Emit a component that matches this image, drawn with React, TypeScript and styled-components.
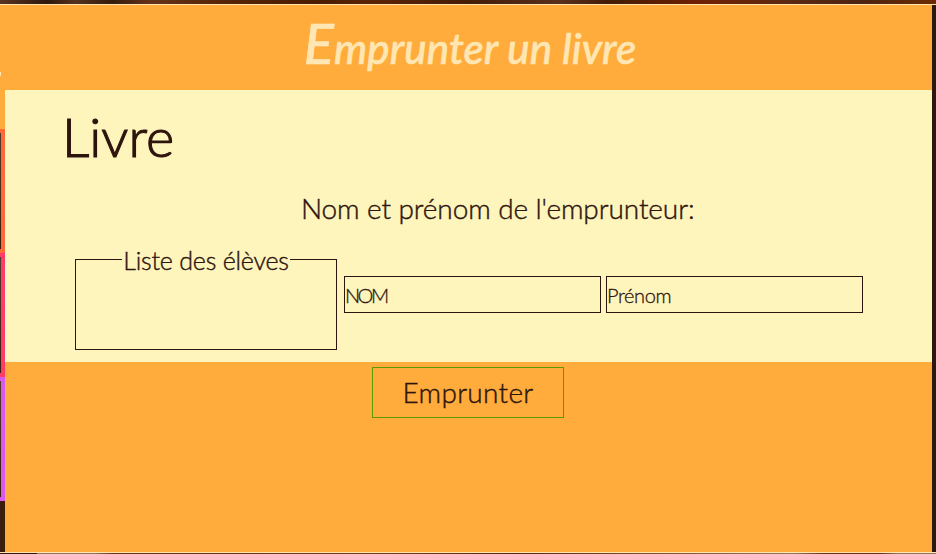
import React from "react";
import styled, { createGlobalStyle } from "styled-components";

const ink = "#2e140e";
const orange = "#ffac3c";
const cream = "#fdf5bc";

const GlobalStyle = createGlobalStyle`
  * { box-sizing: border-box; }
  body { margin: 0; background: #2e180d; color: ${ink}; font-family: Lato, "Open Sans", sans-serif; font-weight: 300; overflow: hidden; }
`;

const Page = styled.div`
  width: 936px;
  height: 554px;
  display: grid;
  grid-template-rows: 4px 549px 1px;
`;

const TopStrip = styled.div`
  background: linear-gradient(90deg, #5a3521 0%, #2e180d 5%, #55321f 8%, #351b0c 12%, #64331a 16%, #572408 24%, #4a1d02 34%, #5b2409 40%, #451c06 50%, #59301d 60%, #431c08 65%, #702100 75%, #5c2912 84%, #4c2413 92%, #6d2b00 100%);
`;

const BottomStrip = styled.div`
  background: linear-gradient(90deg, #2e180d 0 4%, #8d775c 4% 10%, #683211 12% 25%, #7b3d12 40%, #56270b 55%, #805028 70%, #8d775c 85%, #712b0b 88% 94%, #8d775c 96%);
`;

const Window = styled.div`
  display: grid;
  grid-template-columns: 5px 927px 4px;
  border-top: 1px solid #ffe4ae;
  border-bottom: 1px solid #ffe4ae;
`;

const Rail = styled.div`
  display: flex;
  flex-direction: column;
  background: #3a1d0c;
`;

const RailHead = styled.div`
  height: 124px;
  padding-top: 67px;
  background: ${orange};
`;

const RailMark = styled.div`
  width: 1px;
  height: 4px;
  background: #ffe4b5;
`;

const RailCard = styled.div<{ $color: string }>`
  height: 124px;
  border: solid ${(p) => p.$color};
  border-width: 4px 4px 4px 0;
  background: linear-gradient(#55392a, #3a1d0c);
`;

const Panel = styled.main`
  display: flex;
  flex-direction: column;
  background: ${orange};
`;

const Header = styled.header`
  height: 85px;
  display: flex;
  justify-content: center;
  padding: 12px 0 0 3px;
`;

const Title = styled.h1`
  margin: 0;
  font-size: 42px;
  line-height: 62px;
  font-weight: 500;
  font-style: italic;
  letter-spacing: 0.1px;
  white-space: nowrap;
  color: #ffe6b3;
  -webkit-text-stroke: 0.6px #ffe6b3;
  &::first-letter { font-size: 56px; line-height: 50px; }
`;

const Content = styled.section`
  height: 272px;
  background: ${cream};
`;

const BookTitle = styled.h2`
  margin: 0;
  padding: 15px 0 0 57px;
  font-size: 54px;
  line-height: 64px;
  font-weight: 300;
  letter-spacing: 0;
  -webkit-text-stroke: 1.1px ${ink};
`;

const Question = styled.p`
  margin: 0;
  height: 81px;
  padding: 21px 0 0 296px;
  font-size: 28px;
  line-height: 36px;
  letter-spacing: -0.1px;
  white-space: nowrap;
  -webkit-text-stroke: 0.4px ${ink};
`;

const Fields = styled.div`
  display: flex;
  align-items: flex-start;
  padding-left: 70px;
`;

const PupilList = styled.fieldset`
  width: 262px;
  height: 100px;
  margin: 0 7px 0 0;
  padding: 0;
  border: 1px solid ${ink};
`;

const Legend = styled.legend`
  margin: 0 auto;
  height: 19px;
  padding: 0 1px;
  font-size: 25px;
  line-height: 21px;
  letter-spacing: -0.2px;
  white-space: nowrap;
  -webkit-text-stroke: 0.4px ${ink};
`;

const NameInput = styled.input<{ $spacing: string }>`
  width: 257px;
  height: 37px;
  margin: 26px 5px 0 0;
  padding: 0;
  border: 1px solid ${ink};
  outline: 0;
  border-radius: 0;
  background: transparent;
  font: 300 20px Lato, sans-serif;
  letter-spacing: ${(p) => p.$spacing};
  color: ${ink};
  -webkit-text-stroke: 0.3px ${ink};
  &::placeholder { color: ${ink}; opacity: 1; }
`;

const Submit = styled.button`
  width: 192px;
  height: 51px;
  margin: 5px 0 0 367px;
  padding: 0 0 1px;
  border: 1px solid #5c9a00;
  background: transparent;
  font: 300 28px Lato, sans-serif;
  letter-spacing: 0.3px;
  color: ${ink};
  -webkit-text-stroke: 0.4px ${ink};
`;

export default function App() {
  return (
    <>
      <GlobalStyle />
      <Page>
        <TopStrip />
        <Window>
          <Rail>
            <RailHead><RailMark /></RailHead>
            <RailCard $color="#ff6838" />
            <RailCard $color="#ff3d68" />
            <RailCard $color="#d75af0" />
          </Rail>
          <Panel>
            <Header><Title>Emprunter un livre</Title></Header>
            <Content>
              <BookTitle>Livre</BookTitle>
              <Question>Nom et prénom de l'emprunteur:</Question>
              <Fields>
                <PupilList><Legend>Liste des élèves</Legend></PupilList>
                <NameInput placeholder="NOM" $spacing="-2.5px" />
                <NameInput placeholder="Prénom" $spacing="-0.4px" />
              </Fields>
            </Content>
            <Submit>Emprunter</Submit>
          </Panel>
        </Window>
        <BottomStrip />
      </Page>
    </>
  );
}
